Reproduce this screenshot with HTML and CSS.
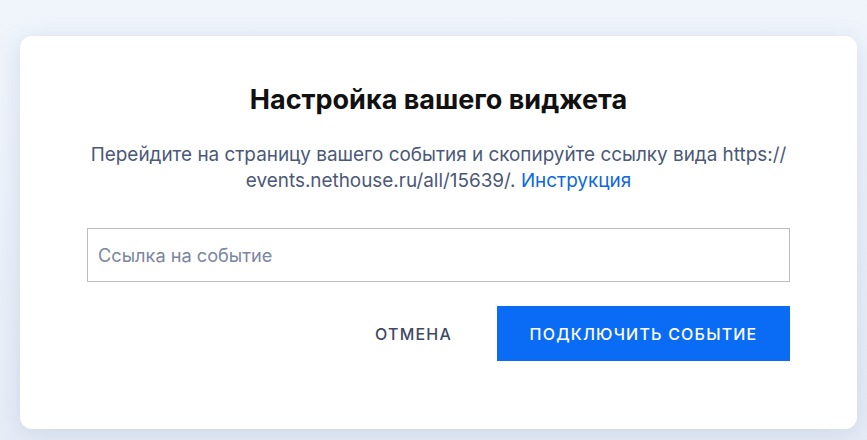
FILE: index.html
```html
<!DOCTYPE html>
<html lang="ru">
<head>
    <title>Настройка вашего виджета</title>
    <meta charset="UTF-8">
    <meta name="viewport" content="width=device-width, initial-scale=1.0">
    <link rel="stylesheet" href="styles.css">
</head>
<body>
    <div class="page">
        <div class="modal">
            <h2 class="modal-title">Настройка вашего виджета</h2>
            <p class="modal-text">
                Перейдите на страницу вашего события и скопируйте ссылку вида https://<br>
                events.nethouse.ru/all/15639/. <a href="#" class="link">Инструкция</a>
            </p>
            <input class="field" type="text" placeholder="Ссылка на событие">
            <div class="actions">
                <button type="button" class="btn-cancel">Отмена</button>
                <button type="button" class="btn-primary">Подключить событие</button>
            </div>
        </div>
    </div>
</body>
</html>
```

FILE: styles.css
```css
body {
    margin: 0;
    font-family: Inter, "Noto Sans", Arial, sans-serif;
    background: linear-gradient(180deg, #f0f5fc 0%, #e6ecf6 100%);
    min-height: 440px;
}

.page {
    padding: 36px 10px 0 20px;
}

.modal {
    background: #fff;
    border-radius: 12px;
    box-shadow: 0 4px 22px rgba(120, 140, 180, 0.22);
    padding: 48px 67px 68px;
    text-align: center;
}

.modal-title {
    margin: 0;
    font-size: 27px;
    line-height: 32px;
    font-weight: 700;
    color: #111;
}

.modal-text {
    margin: 26px 0 34px;
    font-size: 18.9px;
    line-height: 26px;
    color: #4b5877;
}

.link {
    color: #0b68e0;
    text-decoration: none;
}

.field {
    display: block;
    box-sizing: border-box;
    width: 100%;
    height: 54px;
    padding: 0 10px;
    border: 1px solid #b9bcc3;
    border-radius: 0;
    font-family: inherit;
    font-size: 18.2px;
    color: #222;
    outline: none;
}

.field::placeholder {
    color: #7b86a0;
}

.actions {
    display: flex;
    justify-content: flex-end;
    align-items: center;
    margin-top: 24px;
    gap: 21px;
}

.btn-cancel,
.btn-primary {
    height: 55px;
    border: none;
    font-family: inherit;
    font-size: 16px;
    font-weight: 500;
    letter-spacing: 1.2px;
    text-transform: uppercase;
    cursor: pointer;
}

.btn-cancel {
    background: none;
    color: #3e4963;
    padding: 0 24px;
}

.btn-primary {
    background: #0a6cf4;
    color: #fff;
    padding: 0 30px;
    width: 293px;
}
```
